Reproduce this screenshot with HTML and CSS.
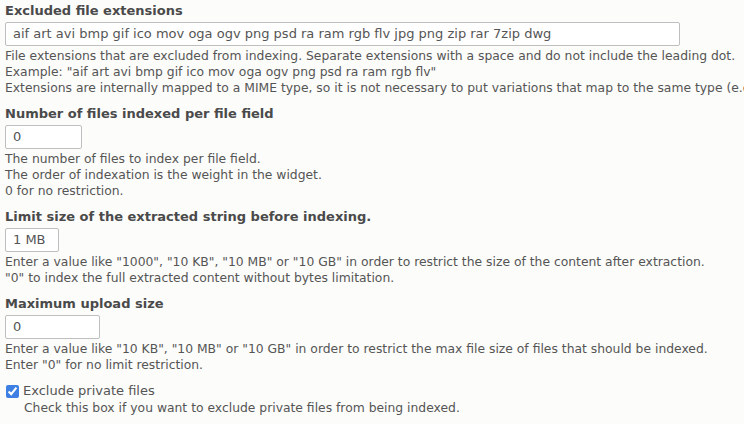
FILE: index.html
```html
<!DOCTYPE html>
<html>
<head>
<meta charset="utf-8">
<link rel="stylesheet" href="styles.css">
</head>
<body>
<form class="form">
  <div class="item">
    <label class="label" for="ext">Excluded file extensions</label>
    <input class="text wide" id="ext" type="text" value="aif art avi bmp gif ico mov oga ogv png psd ra ram rgb flv jpg png zip rar 7zip dwg">
    <div class="desc">File extensions that are excluded from indexing. Separate extensions with a space and do not include the leading dot.<br>Example: "aif art avi bmp gif ico mov oga ogv png psd ra ram rgb flv"<br>Extensions are internally mapped to a MIME type, so it is not necessary to put variations that map to the same type (e.g. tif is sufficient for tif and tiff)</div>
  </div>
  <div class="item">
    <label class="label" for="num">Number of files indexed per file field</label>
    <input class="text w-num" id="num" type="text" value="0">
    <div class="desc">The number of files to index per file field.<br>The order of indexation is the weight in the widget.<br>0 for no restriction.</div>
  </div>
  <div class="item">
    <label class="label" for="lim">Limit size of the extracted string before indexing.</label>
    <input class="text w-lim" id="lim" type="text" value="1 MB">
    <div class="desc">Enter a value like "1000", "10 KB", "10 MB" or "10 GB" in order to restrict the size of the content after extraction.<br>"0" to index the full extracted content without bytes limitation.</div>
  </div>
  <div class="item">
    <label class="label" for="max">Maximum upload size</label>
    <input class="text w-max" id="max" type="text" value="0">
    <div class="desc">Enter a value like "10 KB", "10 MB" or "10 GB" in order to restrict the max file size of files that should be indexed.<br>Enter "0" for no limit restriction.</div>
  </div>
  <div class="item check">
    <div class="check-row">
      <input class="cb" id="priv" type="checkbox" checked>
      <label class="check-label" for="priv">Exclude private files</label>
    </div>
    <div class="desc indent">Check this box if you want to exclude private files from being indexed.</div>
  </div>
</form>
</body>
</html>
```
FILE: styles.css
```css
html, body {
  margin: 0;
  padding: 0;
  background: #fcfcfa;
}
body {
  font-family: "DejaVu Sans", sans-serif;
  font-size: 12.35px;
  color: #555;
  overflow: hidden;
  white-space: nowrap;
}
.form {
  padding: 3px 5px 0;
  display: flex;
  flex-direction: column;
  gap: 10.5px;
}
.item {
  display: flex;
  flex-direction: column;
  align-items: flex-start;
}
.label {
  font-weight: bold;
  font-size: 13px;
  color: #4a4a4a;
  line-height: 16px;
  margin-bottom: 2.5px;
}
.text {
  box-sizing: border-box;
  height: 24px;
  border: 1px solid #bfbfbf;
  border-radius: 2px;
  background: #fff;
  font-family: "DejaVu Sans", sans-serif;
  font-size: 13px;
  color: #555;
  padding: 0 7px;
  margin: 0 0 2px 0;
  outline: none;
}
.wide { width: 675px; }
.w-num { width: 77px; }
.w-lim { width: 54px; }
.w-max { width: 95px; }
.desc {
  line-height: 16px;
}
.check-row {
  display: flex;
  align-items: center;
  gap: 4px;
}
.cb {
  margin: 0 0 0 1px;
  width: 13px;
  height: 13px;
  accent-color: #3d7fe3;
}
.check-label {
  font-size: 13px;
  line-height: 16px;
  color: #555;
}
.indent {
  padding-left: 19px;
  margin-top: 1px;
}
```
